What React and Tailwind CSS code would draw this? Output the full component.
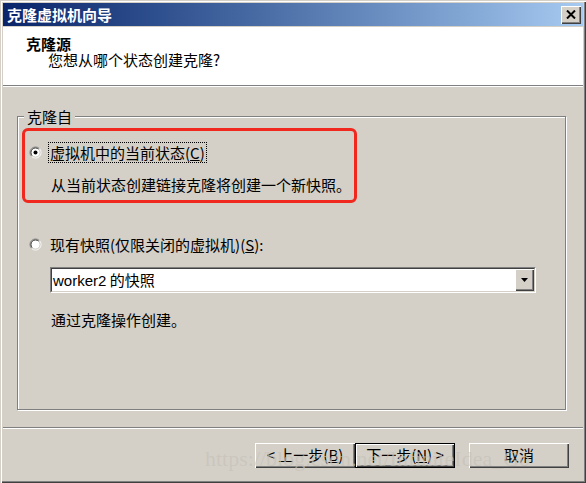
function Radio({ checked }) {
  return (
    <svg width="13" height="13" viewBox="0 0 13 13" className="shrink-0">
      <circle cx="6.5" cy="6.5" r="4.5" fill="#ffffff" />
      <path d="M2.6 10.4 A5.5 5.5 0 0 1 10.4 2.6" fill="none" stroke="#808080" strokeWidth="1" />
      <path d="M10.4 2.6 A5.5 5.5 0 0 1 2.6 10.4" fill="none" stroke="#ffffff" strokeWidth="1" />
      <path d="M3.3 9.7 A4.5 4.5 0 0 1 9.7 3.3" fill="none" stroke="#404040" strokeWidth="1" />
      <path d="M9.7 3.3 A4.5 4.5 0 0 1 3.3 9.7" fill="none" stroke="#d4d0c8" strokeWidth="1" />
      {checked && <circle cx="6.5" cy="6.5" r="2" fill="#000000" />}
    </svg>
  )
}

function Button({ children, isDefault }) {
  if (isDefault) {
    return (
      <div className="w-[100px] h-[25px] border border-black">
        <div className="w-full h-full flex items-center justify-center shadow-[inset_1px_1px_0_#ffffff,inset_-1px_-1px_0_#404040,inset_-2px_-2px_0_#808080]">
          {children}
        </div>
      </div>
    )
  }
  return (
    <div className="w-[100px] h-[25px] flex items-center justify-center shadow-[inset_1px_1px_0_#ffffff,inset_-1px_-1px_0_#404040,inset_-2px_-2px_0_#808080]">
      {children}
    </div>
  )
}

export default function App() {
  return (
    <div className="relative w-[586px] h-[483px] bg-[#d4d0c8] p-[3px] flex flex-col text-black text-[15px] font-['Noto_Sans_CJK_SC',sans-serif] shadow-[inset_1px_1px_0_#d4d0c8,inset_2px_2px_0_#ffffff,inset_-1px_-1px_0_#404040,inset_-2px_-2px_0_#808080]">
      {/* Title bar */}
      <div className="h-[23px] flex items-center justify-between pl-[4px] pr-[2px] bg-linear-to-r from-[#0a246a] to-[#a6caf0]">
        <span className="text-white font-bold leading-[16px]">克隆虚拟机向导</span>
        <div className="w-[20px] h-[18px] bg-[#d4d0c8] flex items-center justify-center shadow-[inset_1px_1px_0_#ffffff,inset_-1px_-1px_0_#404040,inset_-2px_-2px_0_#808080]">
          <svg width="10" height="9" viewBox="0 0 10 9">
            <path d="M1 0.5 L9 8.5 M9 0.5 L1 8.5" stroke="#000" strokeWidth="2" />
          </svg>
        </div>
      </div>

      {/* Header */}
      <div className="mt-[1px] h-[58px] bg-white pl-[23px] pt-[9px]">
        <div className="font-bold leading-[16px]">克隆源</div>
        <div className="pl-[22px] leading-[16px]">您想从哪个状态创建克隆?</div>
      </div>
      <div className="border-t border-t-[#808080] border-b border-b-white"></div>

      {/* Group box */}
      <div className="relative mt-[29px] ml-[14px] w-[549px] h-[294px] border border-[#808080] shadow-[1px_1px_0_#ffffff,inset_1px_1px_0_#ffffff] flex flex-col">
        <span className="absolute left-[6px] top-[-8px] px-[3px] bg-[#d4d0c8] leading-[16px]">克隆自</span>

        <div className="ml-[4px] mt-[11px] w-[335px] h-[75px] border-[3px] border-[#f0281e] rounded-[6px] flex flex-col">
          <div className="mt-[11px] h-[21px] flex items-center">
            <div className="ml-[4px]">
              <Radio checked />
            </div>
            <span className="ml-[6px] border border-dotted border-black px-[1px] leading-[19px]">
              虚拟机中的当前状态(<span className="underline">C</span>)
            </span>
          </div>
          <div className="mt-[14px] ml-[26px] leading-[16px]">从当前状态创建链接克隆将创建一个新快照。</div>
        </div>

        <div className="mt-[31px] ml-[11px] h-[21px] flex items-center">
          <Radio />
          <span className="ml-[6px] border border-transparent px-[1px] leading-[19px]">
            现有快照(仅限关闭的虚拟机)(<span className="underline">S</span>):
          </span>
        </div>

        {/* Combo box */}
        <div className="mt-[12px] ml-[32px] w-[486px] h-[26px] border border-t-[#808080] border-l-[#808080] border-b-white border-r-white">
          <div className="w-full h-full border border-t-[#404040] border-l-[#404040] border-b-[#d4d0c8] border-r-[#d4d0c8] bg-white flex items-center">
            <span className="flex-1 pl-[1px] leading-[18px]">
              <span className="font-['Liberation_Sans',sans-serif]">worker2</span> 的快照
            </span>
            <div className="w-[19px] h-full bg-[#d4d0c8] flex items-center justify-center shadow-[inset_1px_1px_0_#ffffff,inset_-1px_-1px_0_#404040,inset_-2px_-2px_0_#808080]">
              <svg width="7" height="4" viewBox="0 0 7 4">
                <path d="M0 0 H7 L3.5 4 Z" fill="#000" />
              </svg>
            </div>
          </div>
        </div>

        <div className="mt-[19px] ml-[33px] leading-[16px]">通过克隆操作创建。</div>
      </div>

      <div className="mt-[17px] border-t border-t-[#808080] border-b border-b-white"></div>

      {/* Buttons */}
      <div className="mt-[14px] flex justify-end pr-[14px]">
        <Button>
          &lt; 上一步(<span className="underline">B</span>)
        </Button>
        <Button isDefault>
          下一步(<span className="underline">N</span>) &gt;
        </Button>
        <div className="w-[14px]"></div>
        <Button>取消</Button>
      </div>

      {/* Watermark */}
      <span className="absolute left-[205px] top-[447px] pointer-events-none text-[22px] leading-[24px] text-[#c6c2ba]/70 font-['Liberation_Serif',serif]">
        https://blog.csdn.net/InfiniteIdea_Go
      </span>
    </div>
  )
}
